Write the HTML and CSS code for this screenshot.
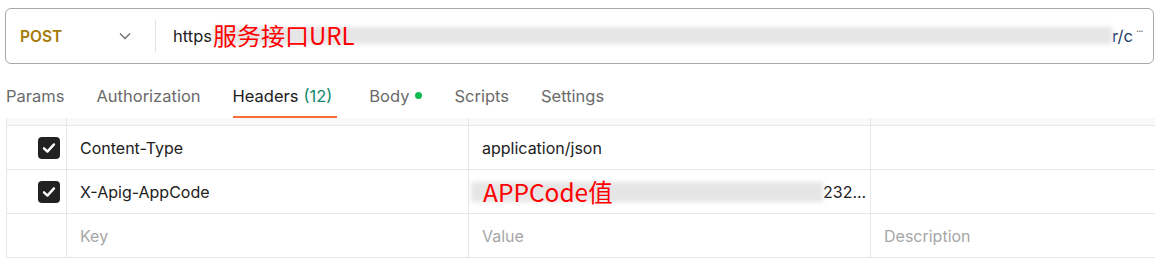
FILE: index.html
```html
<!DOCTYPE html>
<html lang="zh-CN">
<head>
<meta charset="utf-8">
<title>Request</title>
<link rel="stylesheet" href="styles.css">
</head>
<body>
<div class="urlbar">
  <div class="method">
    <span class="method-name">POST</span>
    <svg class="chev" width="12" height="8" viewBox="0 0 12 8"><path d="M1 1.5 L6 6.5 L11 1.5" fill="none" stroke="#6b6b6b" stroke-width="1.3"/></svg>
  </div>
  <div class="divider"></div>
  <div class="url">
    <span class="url-text">https</span>
    <div class="mask-wrap">
      <div class="blur url-blur"></div>
      <span class="anno url-anno">服务接口URL</span>
    </div>
    <span class="url-text tail">r/c</span><span class="dots">···</span>
  </div>
</div>

<div class="tabs">
  <span class="tab">Params</span>
  <span class="tab">Authorization</span>
  <span class="tab active">Headers <span class="count">(12)</span></span>
  <span class="tab">Body <span class="dot"></span></span>
  <span class="tab">Scripts</span>
  <span class="tab">Settings</span>
</div>

<div class="table">
  <div class="row head">
    <div class="cell c1"></div><div class="cell c2"></div><div class="cell c3"></div><div class="cell c4"></div>
  </div>
  <div class="row">
    <div class="cell c1"><span class="check"><svg width="14" height="12" viewBox="0 0 14 12"><path d="M2 6.3 L5.4 9.6 L12 2.4" fill="none" stroke="#fff" stroke-width="2.4" stroke-linecap="round" stroke-linejoin="round"/></svg></span></div>
    <div class="cell c2">Content-Type</div>
    <div class="cell c3">application/json</div>
    <div class="cell c4"></div>
  </div>
  <div class="row">
    <div class="cell c1"><span class="check"><svg width="14" height="12" viewBox="0 0 14 12"><path d="M2 6.3 L5.4 9.6 L12 2.4" fill="none" stroke="#fff" stroke-width="2.4" stroke-linecap="round" stroke-linejoin="round"/></svg></span></div>
    <div class="cell c2">X-Apig-AppCode</div>
    <div class="cell c3 val">
      <div class="mask-wrap val-wrap">
        <div class="blur val-blur"></div>
        <span class="anno val-anno">APPCode值</span>
      </div>
      <span class="val-tail">232...</span>
    </div>
    <div class="cell c4"></div>
  </div>
  <div class="row">
    <div class="cell c1"></div>
    <div class="cell c2 ph">Key</div>
    <div class="cell c3 ph">Value</div>
    <div class="cell c4 ph">Description</div>
  </div>
</div>
</body>
</html>
```

FILE: styles.css
```css
* { box-sizing: border-box; }
html, body { margin: 0; padding: 0; background: #fff; }
body {
  font-family: Inter, "Noto Sans", sans-serif;
  font-size: 16px;
  color: #212121;
  width: 1155px;
  height: 261px;
  overflow: hidden;
}

.urlbar {
  margin: 8px 1px 0 5px;
  height: 56px;
  border: 1px solid #a9a9a9;
  border-radius: 6px;
  display: flex;
  align-items: center;
}
.method {
  width: 149px;
  display: flex;
  align-items: center;
  padding-left: 14px;
}
.method-name {
  color: #a67a07;
  font-weight: 600;
  font-size: 15.5px;
  width: 99px;
}
.chev { display: block; }
.divider {
  width: 1px;
  height: 32px;
  background: #e4e4e4;
}
.url {
  flex: 1;
  display: flex;
  align-items: center;
  padding-left: 17px;
  height: 100%;
}
.url-text { color: #212121; font-size: 16.5px; }
.mask-wrap { position: relative; }
.url .mask-wrap { width: 900px; height: 30px; }
.blur {
  position: absolute;
  background: #e6e6e6;
  filter: blur(2px);
}
.url-blur { left: 1px; right: 0; top: 6px; height: 17px; }
.anno {
  position: absolute;
  color: #ff0000;
  font-family: "Noto Sans CJK SC", "Microsoft YaHei", sans-serif;
  white-space: nowrap;
}
.url-anno { left: 1px; top: -2px; font-size: 24px; line-height: 32px; }
.tail { color: #1c3c66; }
.dots {
  color: #7a7a7a;
  font-size: 11px;
  align-self: flex-start;
  margin-top: 15px;
  margin-left: 3px;
  letter-spacing: -1px;
}

.tabs {
  display: flex;
  gap: 32px;
  padding-left: 6px;
  height: 54px;
  align-items: stretch;
}
.tab {
  color: #6b6b6b;
  font-size: 16.5px;
  display: flex;
  align-items: center;
  padding-top: 11px;
  border-bottom: 2px solid transparent;
}
.tab.active {
  color: #212121;
  border-bottom-color: #ff6c37;
  padding-right: 5px;
}
.count { color: #0e8a68; margin-left: 5px; }
.dot {
  width: 7px; height: 7px;
  border-radius: 50%;
  background: #0cbb52;
  margin-left: 6px;
  display: inline-block;
}

.table {
  margin-left: 6px;
  width: 1200px;
}
.row {
  display: flex;
  height: 44px;
  border-bottom: 1px solid #e6e6e6;
}
.row.head {
  height: 8px;
  background: #f9f9f9;
  border-bottom: 1px solid #e6e6e6;
}
.cell {
  border-left: 1px solid #e6e6e6;
  display: flex;
  align-items: center;
  padding-left: 13px;
  white-space: nowrap;
}
.c1 { width: 60px; justify-content: flex-end; padding-left: 0; padding-right: 6px; }
.c2 { width: 402px; }
.c3 { width: 402px; position: relative; }
.c4 { flex: 1; }
.check {
  width: 22px; height: 22px;
  background: #212121;
  border-radius: 4px;
  display: flex;
  align-items: center;
  justify-content: center;
}
.ph { color: #a6a6a6; }
.val { padding-left: 2px; }
.val-wrap { width: 352px; height: 30px; }
.val-blur { left: 0; right: 0; top: 5px; height: 20px; }
.val-anno { left: 12px; top: -1px; font-size: 24.5px; line-height: 32px; }
.val-tail { color: #212121; }
```
